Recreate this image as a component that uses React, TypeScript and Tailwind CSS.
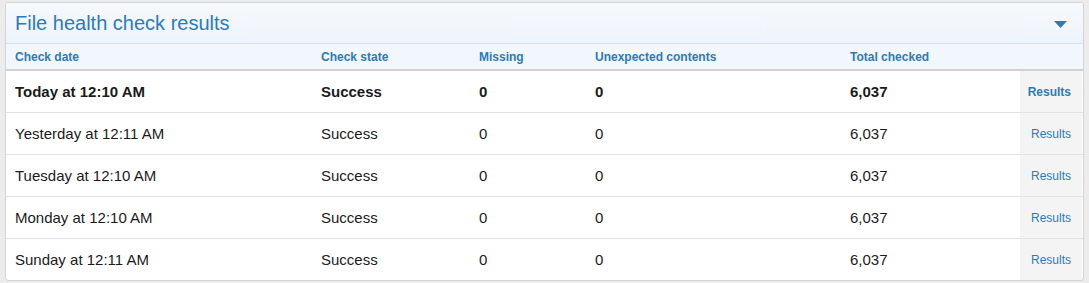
const rows = [
  { date: 'Today at 12:10 AM', state: 'Success', missing: '0', unexpected: '0', total: '6,037', latest: true },
  { date: 'Yesterday at 12:11 AM', state: 'Success', missing: '0', unexpected: '0', total: '6,037' },
  { date: 'Tuesday at 12:10 AM', state: 'Success', missing: '0', unexpected: '0', total: '6,037' },
  { date: 'Monday at 12:10 AM', state: 'Success', missing: '0', unexpected: '0', total: '6,037' },
  { date: 'Sunday at 12:11 AM', state: 'Success', missing: '0', unexpected: '0', total: '6,037' },
]

const cols = 'grid grid-cols-[306px_158px_116px_255px_179px_62px]'

export default function App() {
  return (
    <div
      className="min-h-[283px] w-[1089px] bg-[#ececec] pt-[2px] pl-[5px]"
      style={{ fontFamily: '"Liberation Sans", Arial, sans-serif' }}
    >
      <div className="w-[1079px] overflow-hidden rounded-[3px] border border-[#d4d4d4] bg-white">
        {/* panel header */}
        <div className="flex h-[41px] items-center justify-between border-b border-[#d9dfe6] bg-gradient-to-b from-[#f6f9fd] to-[#eef4fc] pl-[9px] pr-[16px]">
          <h2 className="text-[20px] leading-none text-[#2c7bb8]">File health check results</h2>
          <svg width="13" height="7" viewBox="0 0 13 7" className="mt-[3px]">
            <path d="M0 0 L13 0 L6.5 7 Z" fill="#2c7bb8" />
          </svg>
        </div>

        {/* column headings */}
        <div className={`${cols} h-[27px] items-center border-b-2 border-[#d2d2d2] bg-[#f2f7fd] text-[12px] font-bold text-[#2c7bb8]`}>
          <div className="pl-[9px]">Check date</div>
          <div className="pl-[9px]">Check state</div>
          <div className="pl-[9px]">Missing</div>
          <div className="pl-[9px]">Unexpected contents</div>
          <div className="pl-[9px]">Total checked</div>
          <div />
        </div>

        {rows.map((r, i) => {
          const last = i === rows.length - 1
          return (
            <div
              key={r.date}
              className={`${cols} items-center text-[15px] text-[#1b1b1b] ${last ? 'h-[41px]' : 'h-[42px] border-b border-[#e3e3e3]'} ${r.latest ? 'font-bold' : ''}`}
            >
              <div className="pl-[9px] pt-[1px]">{r.date}</div>
              <div className="pl-[9px] pt-[1px]">{r.state}</div>
              <div className="pl-[9px] pt-[1px]">{r.missing}</div>
              <div className="pl-[9px] pt-[1px]">{r.unexpected}</div>
              <div className="pl-[9px] pt-[1px]">{r.total}</div>
              <div className="flex h-full items-center justify-end bg-[#f4f4f4] pr-[11px] text-[12px] text-[#2c7bb8]">
                Results
              </div>
            </div>
          )
        })}
      </div>
    </div>
  )
}
